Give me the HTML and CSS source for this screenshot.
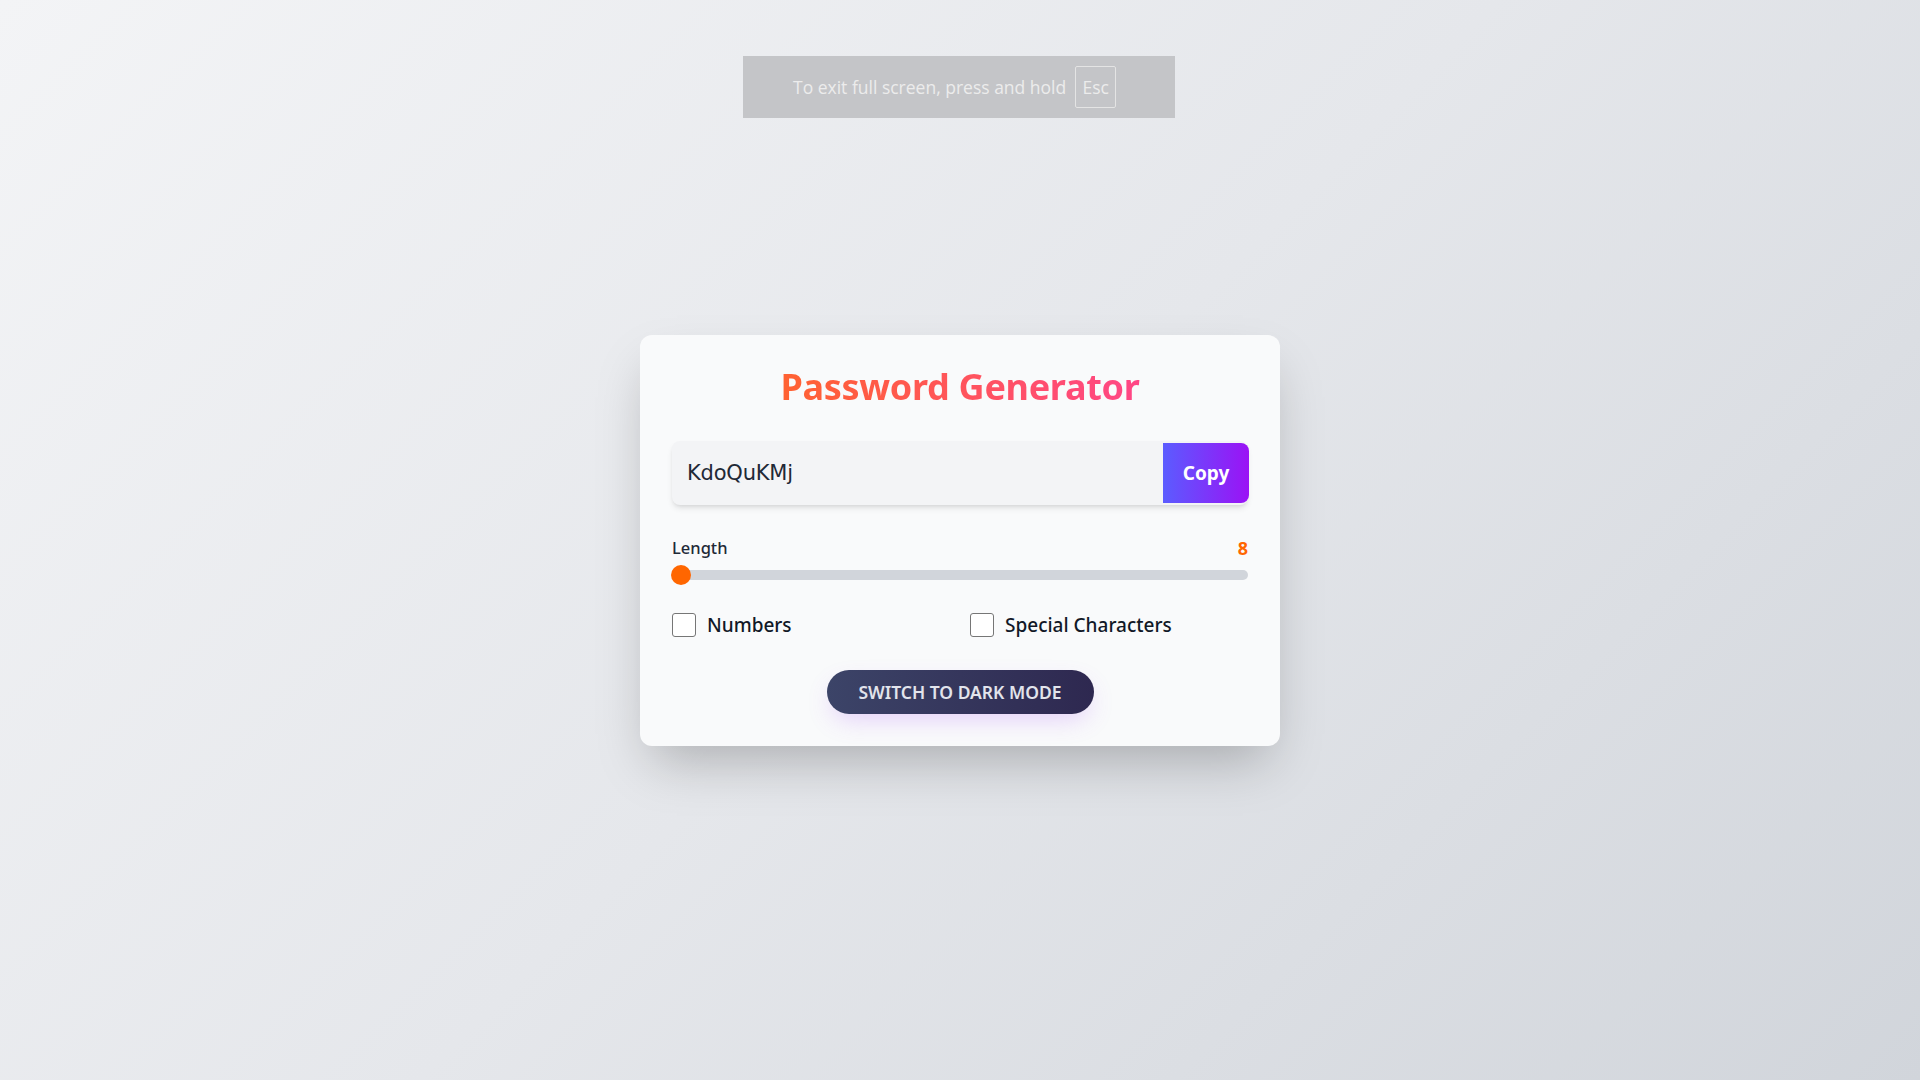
FILE: index.html
```html
<!DOCTYPE html>
<html lang="en">
<head>
<meta charset="utf-8">
<title>Password Generator</title>
<link rel="stylesheet" href="styles.css">
</head>
<body>
<div class="fs-toast">
  <span class="fs-text">To exit full screen, press and hold</span>
  <span class="fs-key">Esc</span>
</div>
<main class="page">
  <section class="card">
    <h1 class="title">Password Generator</h1>
    <div class="pw-box">
      <span class="pw-text">KdoQuKMj</span>
      <button class="copy-btn">Copy</button>
    </div>
    <div class="length-row">
      <span class="length-label">Length</span>
      <span class="length-value">8</span>
    </div>
    <div class="slider">
      <div class="slider-track"></div>
      <div class="slider-thumb"></div>
    </div>
    <div class="options">
      <label class="option"><span class="box"></span><span class="option-text">Numbers</span></label>
      <label class="option"><span class="box"></span><span class="option-text">Special Characters</span></label>
    </div>
    <div class="btn-row">
      <button class="mode-btn">SWITCH TO DARK MODE</button>
    </div>
  </section>
</main>
</body>
</html>
```
FILE: styles.css
```css
* { box-sizing: border-box; }
html, body { margin: 0; padding: 0; height: 100%; }
body {
  font-family: "Noto Sans", "Open Sans", sans-serif;
  background: linear-gradient(135deg, #f3f4f6 0%, #e5e7eb 50%, #d1d5db 100%);
  min-height: 1080px;
}
.page {
  height: 1080px;
  display: flex;
  align-items: center;
  justify-content: center;
}
.card {
  width: 640px;
  height: 411px;
  background: #f9fafb;
  border-radius: 12px;
  padding: 32px 32px 31px;
  box-shadow: 0 25px 50px -12px rgba(0,0,0,0.25);
  display: flex;
  flex-direction: column;
}
.title {
  margin: 0;
  height: 42px;
  line-height: 40px;
  font-size: 36px;
  font-weight: 700;
  text-align: center;
  letter-spacing: -0.3px;
  background: linear-gradient(to right, #ff6231, #ff4686);
  -webkit-background-clip: text;
  background-clip: text;
  color: transparent;
  align-self: center;
}
.pw-box {
  margin-top: 32px;
  height: 64px;
  background: #f3f4f6;
  border-radius: 8px;
  box-shadow: 0 4px 6px -1px rgba(0,0,0,0.1), 0 2px 4px -2px rgba(0,0,0,0.1);
  display: flex;
  align-items: center;
  justify-content: space-between;
  padding-left: 15px;
}
.pw-text {
  font-family: "DejaVu Sans", sans-serif;
  font-size: 21px;
  color: #1f2937;
  letter-spacing: -0.2px;
}
.copy-btn {
  width: 86px;
  height: 60px;
  margin-right: -1px;
  border: none;
  border-radius: 0 8px 8px 0;
  background: linear-gradient(to right, #5b5cff, #9b12f5);
  color: #fff;
  font-family: "Noto Sans", sans-serif;
  font-weight: 700;
  font-size: 19px;
  padding: 0;
}
.length-row {
  margin-top: 29px;
  height: 28px;
  display: flex;
  align-items: center;
  justify-content: space-between;
}
.length-label {
  font-size: 16.5px;
  font-weight: 500;
  color: #1f2937;
}
.length-value {
  font-size: 18px;
  font-weight: 700;
  color: #ff6600;
}
.slider {
  position: relative;
  margin-top: 3px;
  height: 20px;
  display: flex;
  align-items: center;
}
.slider-track {
  flex: 1;
  height: 10px;
  background: #d1d5db;
  border-radius: 5px;
}
.slider-thumb {
  position: absolute;
  left: -1px;
  top: 0;
  width: 20px;
  height: 20px;
  border-radius: 50%;
  background: #ff6600;
}
.options {
  margin-top: 26px;
  display: grid;
  grid-template-columns: 1fr 1fr;
  column-gap: 20px;
  height: 28px;
}
.option {
  display: flex;
  align-items: center;
  gap: 11px;
}
.box {
  width: 24px;
  height: 24px;
  border: 1.5px solid #767676;
  border-radius: 3px;
  background: #fff;
  flex: none;
}
.option-text {
  font-size: 19px;
  font-weight: 500;
  color: #111827;
  line-height: 28px;
}
.btn-row {
  margin-top: 31px;
  display: flex;
  justify-content: center;
}
.mode-btn {
  width: 267px;
  height: 44px;
  border: none;
  border-radius: 22px;
  background: linear-gradient(to right, #3c4468, #2e2850);
  color: #e2e4ec;
  font-family: "Noto Sans", sans-serif;
  font-weight: 600;
  font-size: 17.5px;
  letter-spacing: 0;
  box-shadow: 0 10px 25px -5px rgba(168, 85, 247, 0.25);
  padding: 0;
}
.fs-toast {
  position: absolute;
  top: 56px;
  left: 743px;
  width: 432px;
  height: 62px;
  background: #c4c5c8;
  display: flex;
  align-items: center;
  padding-left: 50px;
  gap: 9px;
}
.fs-text {
  font-family: "Open Sans", sans-serif;
  font-size: 17.5px;
  color: #ececec;
}
.fs-key {
  width: 41px;
  height: 42px;
  border: 1px solid #e4e4e4;
  border-radius: 2px;
  display: flex;
  align-items: center;
  justify-content: center;
  font-family: "Open Sans", sans-serif;
  font-size: 17.5px;
  color: #ececec;
}
```
